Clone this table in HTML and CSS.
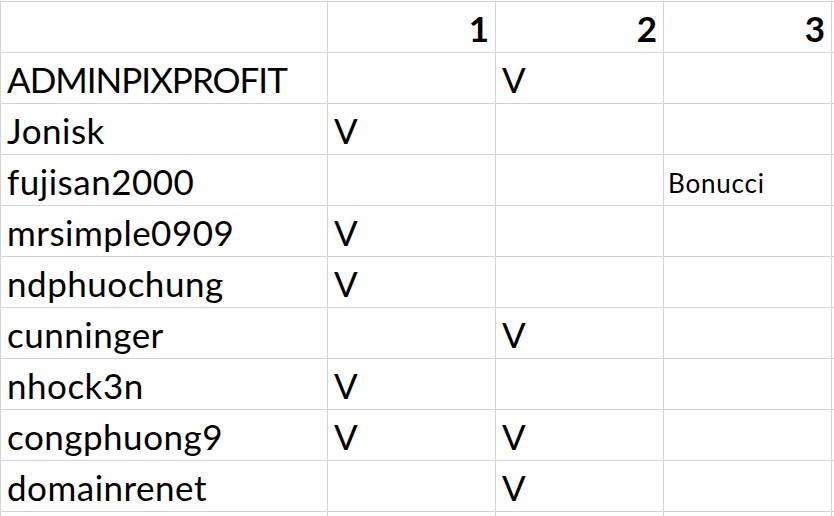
FILE: index.html
```html
<!DOCTYPE html>
<html>
<head>
<meta charset="utf-8">
<link rel="stylesheet" href="styles.css">
</head>
<body>
<div class="sheet">
  <div class="cell"></div><div class="cell num">1</div><div class="cell num">2</div><div class="cell num">3</div><div class="cell"></div>
  <div class="cell caps">ADMINPIXPROFIT</div><div class="cell"></div><div class="cell">V</div><div class="cell"></div><div class="cell"></div>
  <div class="cell">Jonisk</div><div class="cell">V</div><div class="cell"></div><div class="cell"></div><div class="cell"></div>
  <div class="cell">fujisan2000</div><div class="cell"></div><div class="cell"></div><div class="cell small">Bonucci</div><div class="cell"></div>
  <div class="cell">mrsimple0909</div><div class="cell">V</div><div class="cell"></div><div class="cell"></div><div class="cell"></div>
  <div class="cell">ndphuochung</div><div class="cell">V</div><div class="cell"></div><div class="cell"></div><div class="cell"></div>
  <div class="cell">cunninger</div><div class="cell"></div><div class="cell">V</div><div class="cell"></div><div class="cell"></div>
  <div class="cell">nhock3n</div><div class="cell">V</div><div class="cell"></div><div class="cell"></div><div class="cell"></div>
  <div class="cell">congphuong9</div><div class="cell">V</div><div class="cell">V</div><div class="cell"></div><div class="cell"></div>
  <div class="cell">domainrenet</div><div class="cell"></div><div class="cell">V</div><div class="cell"></div><div class="cell"></div>
  <div class="cell"></div><div class="cell"></div><div class="cell"></div><div class="cell"></div><div class="cell"></div>
</div>
</body>
</html>
```
FILE: styles.css
```css
html, body {
  margin: 0;
  padding: 0;
  background: #fff;
  overflow: hidden;
}
.sheet {
  margin-top: 1px;
  width: 834px;
  height: 515px;
  overflow: hidden;
  display: grid;
  grid-template-columns: 326px 167px 167px 167px 1fr;
  grid-auto-rows: 50px;
  gap: 1px;
  padding: 1px 0 0 1px;
  box-sizing: border-box;
  background: #d4d4d4;
  font-family: Lato, "Open Sans", sans-serif;
  font-size: 35px;
  color: #000;
}
.cell {
  background: #fff;
  display: flex;
  align-items: flex-end;
  padding: 0 5px 3px 6px;
  white-space: nowrap;
  overflow: hidden;
  line-height: 1.2;
  letter-spacing: 0.5px;
}
.caps {
  letter-spacing: -1px;
}
.num {
  justify-content: flex-end;
  font-weight: bold;
  padding-right: 6px;
  letter-spacing: 0;
}
.small {
  font-size: 26px;
  padding-left: 4px;
  padding-bottom: 6px;
  letter-spacing: 0.8px;
}
```
